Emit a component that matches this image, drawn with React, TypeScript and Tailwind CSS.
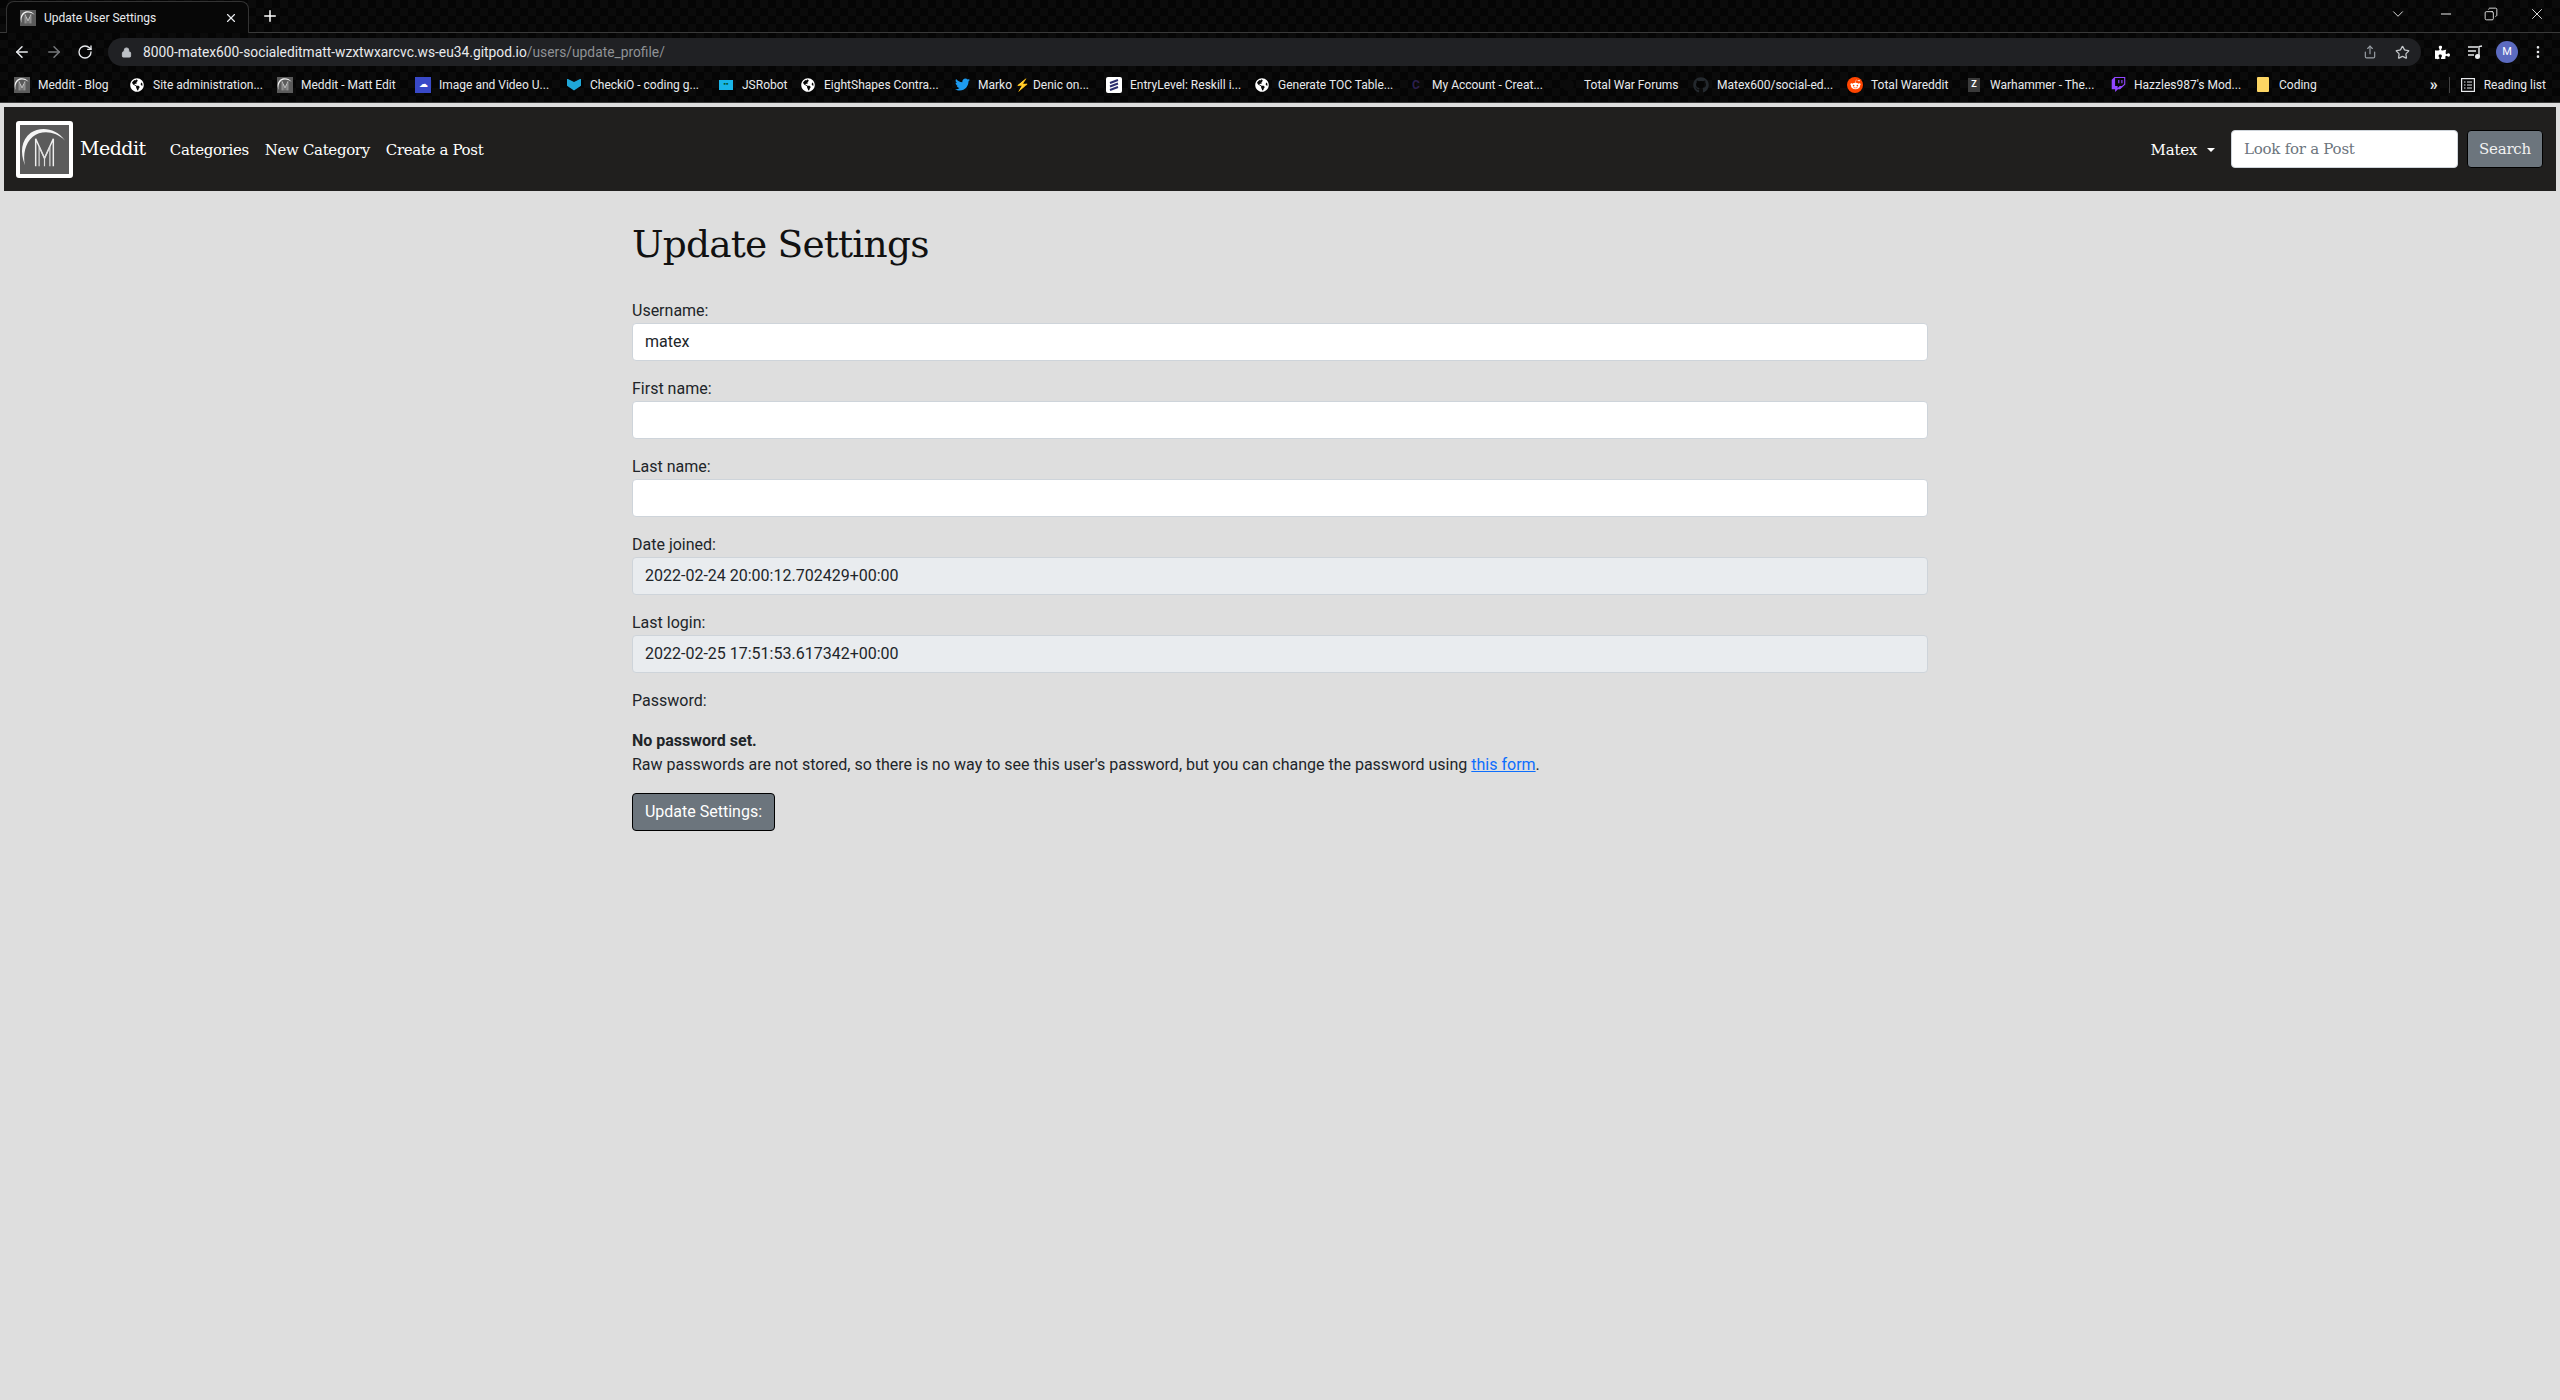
import { ArrowLeft, ArrowRight, ChevronDown, Copy, Lock, Minus, MoreVertical, Plus, RotateCw, Share, Star, X } from 'lucide-react';
import { FaGithub, FaGlobeAmericas, FaPuzzlePiece, FaRedditAlien, FaTwitch, FaTwitter } from 'react-icons/fa';
import type { ReactNode } from 'react';

const slab = "font-['DejaVu_Serif','Liberation_Serif',serif]";

function MedditLogo({ className }: { className: string }) {
  return (
    <svg viewBox="0 0 50 50" className={className}>
      <rect width="50" height="50" fill="#5b5b5b" />
      <path d="M5 41C0 28 1 16 11 8 20 2 36 2 46 16 36 6 22 5 13 12 5 19 3 30 5 41z" fill="#f4f4f4" />
      <path d="M16 42V14l9 20 9-20v28" fill="none" stroke="#eee" strokeWidth="1.5" />
      <path d="M19.5 42V22l5.500 12v8M30.500 42V22L25 34" fill="none" stroke="#ddd" strokeWidth="1.2" />
    </svg>
  );
}

function Bookmark({ icon, label, width }: { icon: ReactNode; label: string; width: string }) {
  return (
    <div className="flex items-center gap-2 shrink-0">
      <div className="flex h-4 w-4 items-center justify-center shrink-0">{icon}</div>
      <span className={`whitespace-nowrap text-[12px] text-[#e8eaed] ${width}`}>{label}</span>
    </div>
  );
}

function BrowserChrome() {
  const globe = <FaGlobeAmericas className="h-[14px] w-[14px] text-white" />;
  return (
    <div className="bg-[#080808] bg-[repeating-conic-gradient(#0b0b0b_0_25%,#050505_0_50%)] bg-[length:16px_16px] font-['Roboto',sans-serif]">
      {/* Tab strip */}
      <div className="flex h-[33px] items-end border-b border-[#3a3a3a] pl-[6px]">
        <div className="-mb-px flex h-[32px] w-[243px] items-center rounded-t-lg border border-b-0 border-[#333] bg-[#070707] pl-[13px] pr-[10px]">
          <MedditLogo className="h-4 w-4 shrink-0" />
          <span className="ml-2 flex-1 text-[12px] text-[#e8eaed]">Update User Settings</span>
          <X className="h-[14px] w-[14px] text-[#e8eaed]" />
        </div>
        <Plus className="mb-[7px] ml-[12px] h-[18px] w-[18px] text-white" />
        <div className="mb-[9px] ml-auto flex items-center text-[#f0f0f0]">
          <ChevronDown className="mr-[31px] h-[18px] w-[18px]" strokeWidth={1.2} />
          <Minus className="mr-[30px] h-[16px] w-[16px]" strokeWidth={1.5} />
          <Copy className="mr-[30px] h-[14px] w-[14px] -scale-x-100" strokeWidth={1.5} />
          <X className="mr-[14px] h-[18px] w-[18px]" strokeWidth={1.2} />
        </div>
      </div>

      {/* Toolbar */}
      <div className="flex h-[34px] items-center pl-[13px] pr-[14px] pt-[4px]">
        <ArrowLeft className="h-[18px] w-[18px] text-[#e8eaed]" />
        <ArrowRight className="ml-[14px] h-[18px] w-[18px] text-[#77797c]" />
        <RotateCw className="ml-[14px] h-[16px] w-[16px] text-[#e8eaed]" />
        <div className="ml-[15px] flex h-[28px] flex-1 items-center rounded-full bg-[#202124] pl-[13px] pr-[11px]">
          <Lock className="h-[11px] w-[11px] fill-[#bdc1c6] text-[#bdc1c6]" />
          <span className="ml-[11px] text-[13.8px] text-[#e8eaed]">
            8000-matex600-socialeditmatt-wzxtwxarcvc.ws-eu34.gitpod.io<span className="text-[#8f9296]">/users/update_profile/</span>
          </span>
          <Share className="ml-auto h-[14px] w-[14px] text-[#9aa0a6]" />
          <Star className="ml-[18px] h-[15px] w-[15px] text-[#c4c7ca]" />
        </div>
        <FaPuzzlePiece className="ml-[14px] h-[15px] w-[15px] text-white" />
        <svg viewBox="0 0 16 16" className="ml-[17px] h-[16px] w-[16px] fill-none stroke-[#e8eaed]" strokeWidth="1.400">
          <path d="M1 3h10M1 7h8M1 11h6" />
          <path d="M12 12V2.500l3-.5" />
          <circle cx="10.500" cy="12.500" r="1.800" fill="#e8eaed" />
        </svg>
        <div className="ml-[13px] flex h-[22px] w-[22px] items-center justify-center rounded-full bg-[#5c6bc0] text-[11px] text-white">M</div>
        <MoreVertical className="ml-[12px] h-[16px] w-[16px] text-[#e8eaed]" />
      </div>

      {/* Bookmarks */}
      <div className="flex h-[36px] items-center border-b border-[#3a3a3a] pl-[14px]">
        <Bookmark icon={<MedditLogo className="h-4 w-4" />} label="Meddit - Blog" width="w-[91px]" />
        <Bookmark icon={globe} label="Site administration..." width="w-[124px]" />
        <Bookmark icon={<MedditLogo className="h-4 w-4" />} label="Meddit - Matt Edit" width="w-[114px]" />
        <Bookmark icon={<div className="flex h-4 w-4 items-center justify-center bg-[#3949c8] text-[9px] text-white">☁</div>} label="Image and Video U..." width="w-[127px]" />
        <Bookmark icon={<div className="h-[12px] w-[14px] bg-[#1fa7d8] [clip-path:polygon(0_0,50%_30%,100%_0,100%_60%,50%_100%,0_60%)]" />} label="CheckiO - coding g..." width="w-[128px]" />
        <Bookmark icon={<div className="flex h-[10px] w-[14px] items-center justify-center bg-[#19b5e8] text-[7px] leading-none text-[#053]">▪▪</div>} label="JSRobot" width="w-[58px]" />
        <Bookmark icon={globe} label="EightShapes Contra..." width="w-[130px]" />
        <Bookmark icon={<FaTwitter className="h-[15px] w-[15px] text-[#1d9bf0]" />} label="Marko ⚡ Denic on..." width="w-[128px]" />
        <Bookmark
          icon={
            <svg viewBox="0 0 16 16" className="h-4 w-4">
              <rect width="16" height="16" rx="2" fill="#fff" />
              <path d="M4 6l8-3M4 9.500l8-3M4 13l8-3" stroke="#2b2d6e" strokeWidth="2" />
            </svg>
          }
          label="EntryLevel: Reskill i..."
          width="w-[124px]"
        />
        <Bookmark icon={globe} label="Generate TOC Table..." width="w-[130px]" />
        <Bookmark icon={<span className="text-[12px] font-bold leading-none text-[#2b1f4d]">C</span>} label="My Account - Creat..." width="w-[128px]" />
        <Bookmark icon={<div className="h-3 w-3 rounded-full bg-[#0b0b0b]" />} label="Total War Forums" width="w-[109px]" />
        <Bookmark icon={<FaGithub className="h-4 w-4 text-[#24292e]" />} label="Matex600/social-ed..." width="w-[130px]" />
        <Bookmark icon={<div className="flex h-4 w-4 items-center justify-center rounded-full bg-[#ff4500]"><FaRedditAlien className="h-[11px] w-[11px] text-white" /></div>} label="Total Wareddit" width="w-[95px]" />
        <Bookmark icon={<div className="flex h-[14px] w-[12px] items-center justify-center bg-[#3b3b3b] text-[9px] font-bold leading-none text-white">Z</div>} label="Warhammer - The..." width="w-[120px]" />
        <Bookmark icon={<FaTwitch className="h-[15px] w-[15px] text-[#9146ff]" />} label="Hazzles987's Mod..." width="w-[121px]" />
        <Bookmark icon={<div className="h-[15px] w-[12px] rounded-[1px] bg-[#fdd663]" />} label="Coding" width="w-[38px]" />
        <span className="ml-auto text-[16px] font-bold leading-none text-[#e8eaed]">»</span>
        <div className="ml-[11px] h-[16px] w-px bg-[#444]" />
        <svg viewBox="0 0 14 14" className="ml-[11px] h-[14px] w-[14px] fill-none stroke-[#e8eaed]" strokeWidth="1.200">
          <rect x=".6" y=".6" width="12.800" height="12.800" />
          <path d="M3 4h1.500M6 4h5M3 7h1.500M6 7h5M3 10h1.500M6 10h5" />
        </svg>
        <span className="ml-[9px] mr-[14px] text-[12px] text-[#e8eaed]">Reading list</span>
      </div>
    </div>
  );
}

function Navbar() {
  return (
    <nav className={`mx-1 mt-1 flex h-[84px] items-center bg-[#201f1e] pl-3 pr-[13px] pt-[2px] text-white ${slab}`}>
      <div className="-mt-[2px] h-[57px] w-[57px] rounded-[3px] border-4 border-white">
        <MedditLogo className="h-full w-full" />
      </div>
      <span className="mb-[4px] ml-[7px] text-[19px] tracking-[-0.5px]">Meddit</span>
      <div className="ml-4 flex text-[15px] tracking-[-0.35px]">
        <a className="px-2">Categories</a>
        <a className="px-2">New Category</a>
        <a className="px-2">Create a Post</a>
      </div>
      <div className="ml-auto flex items-center text-[15px] tracking-[-0.25px]">
        <span>Matex</span>
        <span className="ml-[10px] h-0 w-0 border-x-[4px] border-t-[4px] border-x-transparent border-t-white" />
        <div className="-mt-[2px] ml-4 flex h-[38px] w-[227px] items-center rounded border border-[#ced4da] bg-white px-3 text-[#6c757d]">Look for a Post</div>
        <button className="-mt-[2px] ml-[9px] flex h-[38px] w-[76px] items-center justify-center rounded border border-black bg-[#6c757d] text-[#f2f2f2]">Search</button>
      </div>
    </nav>
  );
}

function Field({ label, value, readOnly }: { label: string; value?: string; readOnly?: boolean }) {
  return (
    <div className="mb-4">
      <div className="h-6 leading-6">{label}</div>
      <div className={`flex h-[38px] items-center rounded border border-[#ced4da] px-3 ${readOnly ? 'bg-[#e9ecef]' : 'bg-white'}`}>{value}</div>
    </div>
  );
}

export default function App() {
  return (
    <div className="min-h-[1400px] bg-[#dedede] font-['Roboto',sans-serif] text-[16px] text-[#212529]">
      <BrowserChrome />
      <Navbar />
      <main className="mx-auto w-[1296px] pt-7">
        <h1 className={`mb-8 h-12 pt-px text-[37.500px] leading-[48px] tracking-[-0.8px] text-[#111] ${slab}`}>Update Settings</h1>
        <form>
          <Field label="Username:" value="matex" />
          <Field label="First name:" />
          <Field label="Last name:" />
          <Field label="Date joined:" value="2022-02-24 20:00:12.702429+00:00" readOnly />
          <Field label="Last login:" value="2022-02-25 17:51:53.617342+00:00" readOnly />
          <div className="mb-4 h-6 leading-6">Password:</div>
          <div className="mb-4 leading-6">
            <strong className="font-bold">No password set.</strong>
            <br />
            Raw passwords are not stored, so there is no way to see this user's password, but you can change the password using{' '}
            <a className="text-[#0d6efd] underline">this form</a>.
          </div>
          <button type="button" className="h-[38px] w-[143px] rounded border border-black bg-[#6c757d] text-white">Update Settings:</button>
        </form>
      </main>
    </div>
  );
}
